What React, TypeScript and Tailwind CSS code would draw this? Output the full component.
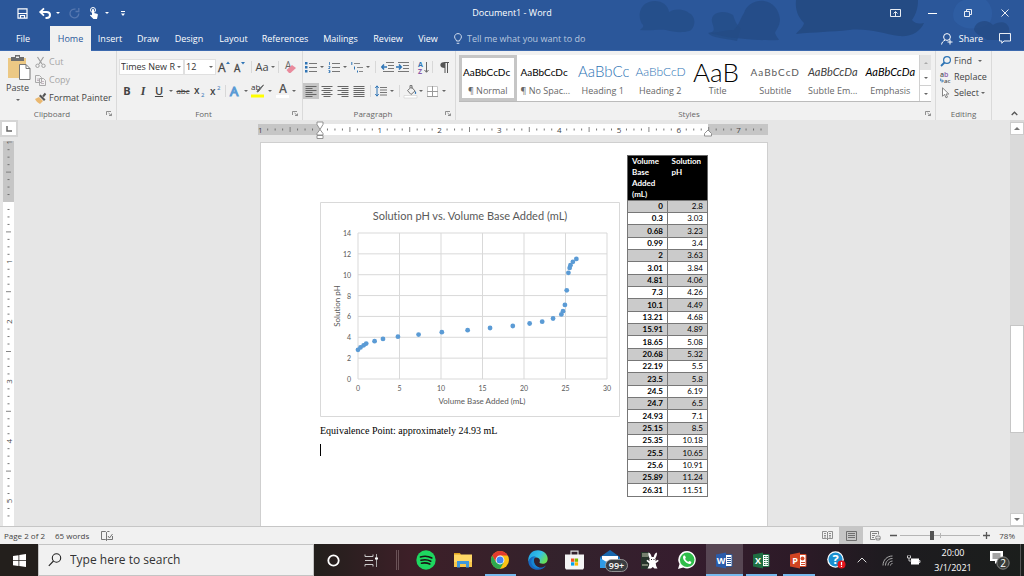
import { useState } from "react";
import type { ReactNode } from "react";
import clsx from "clsx";

const DATA: [number, number][] = [
  [0, 2.8], [0.3, 3.03], [0.68, 3.23], [0.99, 3.4], [2, 3.63], [3.01, 3.84],
  [4.81, 4.06], [7.3, 4.26], [10.1, 4.49], [13.21, 4.68], [15.91, 4.89], [18.65, 5.08],
  [20.68, 5.32], [22.19, 5.5], [23.5, 5.8], [24.5, 6.19], [24.7, 6.5], [24.93, 7.1],
  [25.15, 8.5], [25.35, 10.18], [25.5, 10.65], [25.6, 10.91], [25.89, 11.24], [26.31, 11.51],
];

const TABS = [
  { label: "Insert", width: "w-[38px]" },
  { label: "Draw", width: "w-[38px]" },
  { label: "Design", width: "w-[44px]" },
  { label: "Layout", width: "w-[45px]" },
  { label: "References", width: "w-[58px]" },
  { label: "Mailings", width: "w-[53px]" },
  { label: "Review", width: "w-[42px]" },
  { label: "View", width: "w-[38px]" },
];

const STYLES = [
  { label: "¶ Normal", sample: "AaBbCcDc", look: "text-[10px] text-black" },
  { label: "¶ No Spac...", sample: "AaBbCcDc", look: "text-[10px] text-black" },
  { label: "Heading 1", sample: "AaBbCc", look: "text-[15px] font-light text-[#2e74b5]" },
  { label: "Heading 2", sample: "AaBbCcD", look: "text-[12px] font-light text-[#2e74b5]" },
  { label: "Title", sample: "AaB", look: "text-[26px] font-light text-black" },
  { label: "Subtitle", sample: "AaBbCcD", look: "text-[10px] tracking-widest text-[#5a5a5a]" },
  { label: "Subtle Em...", sample: "AaBbCcDa", look: "text-[11px] italic text-[#404040]" },
  { label: "Emphasis", sample: "AaBbCcDa", look: "text-[11px] italic text-black" },
];

/* ── Small shared pieces ───────────────────────────────────────────── */

function Svg({ w, h, children, className }: { w: number; h: number; children: ReactNode; className?: string }) {
  return (
    <svg width={w} height={h} viewBox={`0 0 ${w} ${h}`} fill="none" aria-hidden="true" className={clsx("shrink-0 overflow-visible", className)}>
      {children}
    </svg>
  );
}

function Caret({ className = "text-[#666]" }: { className?: string }) {
  return (
    <Svg w={4} h={2} className={className}>
      <path d="M0 0h4L2 2z" fill="currentColor" />
    </Svg>
  );
}

function Tool({ label, width = "w-4", active, children }: { label: string; width?: string; active?: boolean; children: ReactNode }) {
  return (
    <button
      type="button"
      aria-label={label}
      className={clsx("flex h-4 shrink-0 items-center justify-center leading-4 text-[#444] hover:bg-[#d5d5d5]", width, active && "bg-[#c6c6c6]")}
    >
      {children}
    </button>
  );
}

function More({ label }: { label: string }) {
  return (
    <Tool label={label} width="w-2">
      <Caret />
    </Tool>
  );
}

function Sep({ margin = "mx-[3px]" }: { margin?: string }) {
  return <span className={clsx("h-3 w-px shrink-0 bg-[#d8d8d8]", margin)} />;
}

function Group({ title, className, launcher, children }: { title: string; className: string; launcher?: boolean; children: ReactNode }) {
  return (
    <section aria-label={title} className={clsx("relative flex shrink-0 flex-col border-r border-[#dadada]", className)}>
      <div className="h-[57px]">{children}</div>
      <p className={clsx("text-center text-[8px] leading-3 text-[#666]", launcher && "pr-3")}>{title}</p>
      {launcher && (
        <button type="button" aria-label={`${title} settings`} className="absolute right-1 bottom-1">
          <Svg w={6} h={5}>
            <path d="M.5 4V.5H5M2.500 2l2.800 2.500M5.500 2.500v2H3" stroke="#777" strokeWidth=".8" />
          </Svg>
        </button>
      )}
    </section>
  );
}

/* ── Title bar and tabs ────────────────────────────────────────────── */

function HeaderArt() {
  return (
    <svg className="absolute top-0 right-0" width="404" height="42" viewBox="0 0 404 42" fill="#244b84" aria-hidden="true">
      <path d="M20 30c2-2 4-3 3-5-6-7-4-20 6-23 10-3 19 2 20 10 6-4 16-3 20 1 6 3 7 10 3 16-3 4-16 4-26 1-8-1-14 1-26 0z" opacity=".7" />
      <path d="M92 22c-2-10 12-13 21-7 2 5 3 10 8 13l-4 13c-14-3-25-3-29-8 8-1 6-4 4-11z" opacity=".7" />
      <path d="M124 13c3-9 12-13 20-12 9 1 15 9 16 18 0 7-4 11-5 14 1 3 3 5 4 7-16 1-36-1-52-3l-18-4c10 0 14-3 25-3 5-5 6-11 10-17z" opacity=".8" />
      <path d="M176 0h122c0 8-2 14-6 20 4 4 6 4 12 3-4 9-13 14-25 13-16-2-30-8-50-6-18 2-34 2-53 4 3-4 7-6 8-11-6-6-9-13-8-23z" />
      <path d="M334 20c-3-8 2-18 10-20h22c6 6 8 14 4 22-8 8-28 10-36-2z" fill="#3061a8" opacity=".6" />
      <path d="M354 30c0-8 12-13 19-5 6-4 14-4 16 3 1 6-2 8 2 12h-24c-4-4-10-4-13-10z" opacity=".8" />
    </svg>
  );
}

function TitleBar() {
  return (
    <div className="relative grid h-[26px] grid-cols-[1fr_auto_1fr] items-center">
      <div className="flex items-center text-white">
        <button type="button" aria-label="Save" className="ml-4 flex w-3 justify-center">
          <Svg w={11} h={11}>
            <path d="M1 .8h9v9.400H1z" stroke="white" strokeWidth="1.200" />
            <path d="M1 5.500h9M3.500 10V7.500h4V10" stroke="white" strokeWidth="1.200" />
          </Svg>
        </button>
        <button type="button" aria-label="Undo" className="ml-[11px] flex w-3 justify-center">
          <Svg w={12} h={11}>
            <path d="M1.500 4h6c2 0 3.500 1 3.500 3s-1.500 3-3.500 3H6.500" stroke="white" strokeWidth="2" />
            <path d="M5 .3 1.200 4 5 7.700" stroke="white" strokeWidth="1.800" />
          </Svg>
        </button>
        <span className="ml-[5px]"><Caret className="text-white" /></span>
        <button type="button" aria-label="Redo" className="ml-2 flex w-3 justify-center">
          <Svg w={11} h={11}>
            <path d="M6.500 1.200A4.400 4.400 0 1 0 9.800 5.500M6.500 3.500h3.300V0" stroke="#5577b0" strokeWidth="1.300" />
          </Svg>
        </button>
        <button type="button" aria-label="Touch mode" className="ml-2 flex w-3 justify-center">
          <Svg w={10} h={12}>
            <circle cx="4" cy="3" r="2.500" stroke="white" />
            <path d="M3 3c0-1.200 2-1.200 2 0v3l3 .8c.8.200 1 .7.8 1.500L8 12H4.500L1 8.500c0-1 1-1 2-.3z" fill="white" />
          </Svg>
        </button>
        <span className="ml-[5px]"><Caret className="text-white" /></span>
        <button type="button" aria-label="Customize toolbar" className="ml-3">
          <Svg w={4} h={5}>
            <path d="M0 .5h4" stroke="white" />
            <path d="M0 2.500h4L2 5z" fill="white" />
          </Svg>
        </button>
      </div>
      <h1 className="text-[9px] text-white">Document1 - Word</h1>
      <div className="flex items-center justify-end">
        <button type="button" aria-label="Ribbon display options" className="flex w-[38px] justify-center">
          <Svg w={11} h={8}>
            <path d="M.5.5h10v7H.5zM5.500 7V3M3.500 4.500l2-2 2 2" stroke="white" strokeWidth=".9" />
          </Svg>
        </button>
        <button type="button" aria-label="Minimize" className="flex w-9 justify-center">
          <Svg w={9} h={1}><path d="M0 .5h9" stroke="white" /></Svg>
        </button>
        <button type="button" aria-label="Restore" className="flex w-9 justify-center">
          <Svg w={8} h={8}>
            <path d="M.5 2.500h5v5h-5zM2.500 2V.5h5v5H6" stroke="white" strokeWidth=".9" />
          </Svg>
        </button>
        <button type="button" aria-label="Close" className="flex w-[38px] justify-center">
          <Svg w={8} h={8}><path d="m.5.5 7 7m0-7-7 7" stroke="white" strokeWidth=".9" /></Svg>
        </button>
      </div>
    </div>
  );
}

function RibbonTabs() {
  return (
    <div className="relative flex h-[25px] text-[9px] text-white shadow-[inset_0_-1px_#3c69ae]">
      <button type="button" className="w-[46px]">File</button>
      <button type="button" className="ml-1 w-[41px] bg-[#f1f1f1] text-[#2b579a]">Home</button>
      {TABS.map(({ label, width }) => (
        <button key={label} type="button" className={clsx("text-center", width)}>{label}</button>
      ))}
      <label className="ml-[7px] flex items-center gap-[5px]">
        <Svg w={8} h={11}>
          <path d="M2.500 8C2.500 6.500.6 6 .6 3.900.6 2 2 .6 4 .6s3.400 1.400 3.400 3.300C7.400 6 5.500 6.500 5.500 8zM2.700 10.300h2.600" stroke="#d5dfee" />
        </Svg>
        <input placeholder="Tell me what you want to do" className="w-[150px] bg-transparent text-[9px] outline-none placeholder:text-[#b8c7df]" />
      </label>
      <div className="ml-auto flex items-center">
        <button type="button" className="flex items-center gap-1.5">
          <Svg w={12} h={12}>
            <circle cx="6" cy="4" r="3.400" stroke="white" />
            <path d="M.6 11.500c.2-2 1.500-3.600 3.400-4.300M9 6.500v5M6.500 9h5" stroke="white" />
          </Svg>
          Share
        </button>
        <button type="button" aria-label="Comments" className="mr-[13px] ml-4">
          <Svg w={12} h={11}><path d="M.5.5h11v7.500H5L2.800 10.300V8H.5z" stroke="white" strokeWidth=".9" /></Svg>
        </button>
      </div>
    </div>
  );
}

/* ── Ribbon ────────────────────────────────────────────────────────── */

function Clipboard() {
  return (
    <Group title="Clipboard" className="w-[117px]" launcher>
      <div className="flex">
        <button type="button" className="flex w-[35px] flex-col items-center pt-1 text-[9px] leading-3 text-[#444]">
          <Svg w={23} h={25} className="ml-1">
            <path d="M0 3h18v20H0z" fill="#ecc884" />
            <path d="M3 2h4V0h5v2h4v4H3z" fill="#6d6d6d" />
            <path d="M8 1.500h3v1.500H8z" fill="#f1f1f1" />
            <path d="M11.500 9.500h6.500l4 4v11H11.500z" fill="white" stroke="#777" />
            <path d="M18 9.500v4h4" stroke="#777" />
          </Svg>
          <span className="mt-0.5">Paste</span>
          <span className="mt-[5px]"><Caret /></span>
        </button>
        <div className="flex flex-col gap-0.5 pt-[3px] text-[9px]">
          <button type="button" className="flex h-4 items-center gap-[3px] text-[#a6a6a6]">
            <Svg w={11} h={11}>
              <path d="M2.500 0 7 7M8.500 0 4 7" stroke="#a0a0a0" strokeWidth="1.200" />
              <circle cx="2.500" cy="8.800" r="1.700" stroke="#a0a0a0" />
              <circle cx="8.500" cy="8.800" r="1.700" stroke="#a0a0a0" />
            </Svg>
            Cut
          </button>
          <button type="button" className="flex h-4 items-center gap-[3px] text-[#a6a6a6]">
            <Svg w={11} h={11}>
              <path d="M.5.5h4l2 2v5h-6zM4.500 3.500h4l2 2v5h-6z" fill="#f1f1f1" stroke="#aaa" />
              <path d="M2 4h2M2 5.500h2M6 6.500h3M6 8.500h3" stroke="#b8a8b4" strokeWidth=".8" />
            </Svg>
            Copy
          </button>
          <button type="button" className="flex h-4 items-center gap-[3px] whitespace-nowrap text-[#444]">
            <Svg w={11} h={11}>
              <path d="m0 6 4-2 4 4-3 3c-2-1-4-3-5-5z" fill="#eab870" />
              <path d="m4 3 1.500-1.500 5 5L9 8z" fill="#555" />
              <path d="m8 3.500 2.500-3" stroke="#555" strokeWidth="2" />
            </Svg>
            Format Painter
          </button>
        </div>
      </div>
    </Group>
  );
}

function FontGroup() {
  return (
    <Group title="Font" className="w-[186px]" launcher>
      <div className="flex flex-col gap-2 pt-2 pl-0.5">
        <div className="flex h-4 items-center">
          <div className="relative h-4 w-[65px]">
            <select aria-label="Font name" className="block h-4 w-full appearance-none border border-[#e0e0e0] bg-white pl-px text-[9px] leading-[14px] text-[#333]">
              <option>Times New R</option>
            </select>
            <span className="pointer-events-none absolute inset-y-0 right-[3px] flex items-center"><Caret /></span>
          </div>
          <div className="relative h-4 w-8">
            <select aria-label="Font size" className="block h-4 w-full appearance-none border border-[#e0e0e0] bg-white pl-px text-[9px] leading-[14px] text-[#333]">
              <option>12</option>
            </select>
            <span className="pointer-events-none absolute inset-y-0 right-[3px] flex items-center"><Caret /></span>
          </div>
          <Tool label="Grow font">
            <Svg w={12} h={12}>
              <text x="0" y="11" fontSize="12" fill="#444" stroke="#444" strokeWidth=".3">A</text>
              <path d="M8 3h4l-2-2.500z" fill="#2e74b5" />
            </Svg>
          </Tool>
          <Tool label="Shrink font">
            <Svg w={12} h={12}>
              <text x="0" y="11" fontSize="10" fill="#444" stroke="#444" strokeWidth=".3">A</text>
              <path d="M7 1h4L9 3.500z" fill="#2e74b5" />
            </Svg>
          </Tool>
          <Sep />
          <Tool label="Change case" width="w-5">
            <span className="mr-0.5 text-[11px]">Aa</span>
            <Caret />
          </Tool>
          <Sep />
          <Tool label="Clear formatting">
            <Svg w={12} h={12}>
              <text x="1" y="8" fontSize="10" fill="#666">A</text>
              <path d="m2.500 9 5.500-5L12 7l-5.500 5H5z" fill="#e98a9c" />
            </Svg>
          </Tool>
        </div>
        <div className="flex h-4 items-center">
          <Tool label="Bold"><span className="text-[11px] font-bold">B</span></Tool>
          <Tool label="Italic"><span className="font-['Liberation_Serif'] text-[12px] font-bold italic">I</span></Tool>
          <Tool label="Underline"><span className="text-[11px] font-semibold underline">U</span></Tool>
          <More label="Underline styles" />
          <Tool label="Strikethrough"><span className="text-[8px] line-through">abc</span></Tool>
          <Tool label="Subscript">
            <Svg w={11} h={12}>
              <text x="0" y="9" fontSize="10" fontWeight="600" fill="#444">x</text>
              <text x="7" y="12" fontSize="6" fill="#2e74b5">2</text>
            </Svg>
          </Tool>
          <Tool label="Superscript">
            <Svg w={11} h={12}>
              <text x="0" y="10" fontSize="10" fontWeight="600" fill="#444">x</text>
              <text x="7" y="5" fontSize="6" fill="#2e74b5">2</text>
            </Svg>
          </Tool>
          <Sep margin="mx-0.5" />
          <Tool label="Text effects" width="w-[14px]">
            <Svg w={12} h={12}>
              <text x="1" y="11" fontSize="13" fill="white" stroke="#5b9bd5" strokeWidth="1.200">A</text>
            </Svg>
          </Tool>
          <More label="Text effect styles" />
          <Tool label="Highlight">
            <Svg w={14} h={14}>
              <text x="0" y="6" fontSize="8" fill="#333">ab</text>
              <path d="m12.500 1-5 6.500L6 8l.5-1.500z" fill="#666" stroke="#666" />
              <path d="M0 10.500h13v3H0z" fill="#ffff00" />
            </Svg>
          </Tool>
          <More label="Highlight colors" />
          <Tool label="Font color">
            <Svg w={13} h={14}>
              <text x="3" y="9" fontSize="12" fontWeight="600" fill="#555">A</text>
              <path d="M0 11h13v3H0z" fill="white" />
            </Svg>
          </Tool>
          <More label="Font colors" />
        </div>
      </div>
    </Group>
  );
}

function Lines({ d }: { d: string }) {
  return (
    <Svg w={12} h={11}>
      <path d={d} stroke="#666" />
    </Svg>
  );
}

function Paragraph() {
  return (
    <Group title="Paragraph" className="w-[153px]" launcher>
      <div className="flex flex-col gap-2 pt-2">
        <div className="flex h-4 items-center">
          <Tool label="Bullets" width="w-[15px]">
            <Svg w={12} h={11}>
              <path d="M4 1.500h8M4 5.500h8M4 9.500h8" stroke="#777" />
              <path d="M0 0h2.500v2.500H0zM0 4h2.500v2.500H0zM0 8h2.500v2.500H0z" fill="#2e74b5" />
            </Svg>
          </Tool>
          <More label="Bullet styles" />
          <Tool label="Numbering" width="w-[15px]">
            <Svg w={12} h={11}>
              <path d="M4 1.500h8M4 5.500h8M4 9.500h8" stroke="#777" />
              <path d="M1.500 0v3M.5 4.500h1.500v1L.5 6.500H2M.5 8.500h1.500v2H.5M1 9.500h1" stroke="#2e74b5" strokeWidth=".8" />
            </Svg>
          </Tool>
          <More label="Numbering styles" />
          <Tool label="Multilevel list" width="w-[15px]">
            <Svg w={12} h={11}>
              <path d="M3 1.500h6M6 5.500h6M8 9.500h4" stroke="#888" />
              <path d="M.8 0v3M3.500 4.500v3M6.500 8.500v2" stroke="#2e74b5" />
            </Svg>
          </Tool>
          <More label="Multilevel styles" />
          <Sep />
          <Tool label="Decrease indent">
            <Svg w={13} h={10}>
              <path d="M5 .5h8M7 3.500h6M7 6.500h6M2 9.500h11" stroke="#777" />
              <path d="M6 5H1M3 2.500.8 5 3 7.500" stroke="#2e74b5" strokeWidth="1.500" />
            </Svg>
          </Tool>
          <Tool label="Increase indent" width="w-[15px]">
            <Svg w={13} h={10}>
              <path d="M2 .5h11M7 3.500h6M7 6.500h6M2 9.500h11" stroke="#777" />
              <path d="M0 5h5M3 2.500 5.300 5 3 7.500" stroke="#2e74b5" strokeWidth="1.500" />
            </Svg>
          </Tool>
          <Sep />
          <Tool label="Sort" width="w-3">
            <Svg w={11} h={13}>
              <text x="0" y="6" fontSize="7" fontWeight="700" fill="#2e74b5">A</text>
              <text x="0" y="13" fontSize="7" fontWeight="700" fill="#8b5ba8">Z</text>
              <path d="M8.500 1v10M6.500 9l2 2.300 2-2.300" stroke="#666" />
            </Svg>
          </Tool>
          <Sep />
          <Tool label="Show marks">
            <Svg w={9} h={11}>
              <path d="M4.500.5H9M5 .5v10.500M7.500.5v10.500" stroke="#555" />
              <path d="M5 0v6C2 6 .3 5 .3 3S2 0 5 0z" fill="#555" />
            </Svg>
          </Tool>
        </div>
        <div className="flex h-4 items-center">
          <Tool label="Align left" active><Lines d="M.5.5h11M.5 2.500h7M.5 4.500h11M.5 6.500h7M.5 8.500h11M.5 10.500h7" /></Tool>
          <Tool label="Center"><Lines d="M.5.5h11M2.500 2.500h7M.5 4.500h11M2.500 6.500h7M.5 8.500h11M2.500 10.500h7" /></Tool>
          <Tool label="Align right"><Lines d="M.5.5h11M4.500 2.500h7M.5 4.500h11M4.500 6.500h7M.5 8.500h11M4.500 10.500h7" /></Tool>
          <Tool label="Justify"><Lines d="M.5.5h11M.5 2.500h11M.5 4.500h11M.5 6.500h11M.5 8.500h11M.5 10.500h11" /></Tool>
          <Sep />
          <Tool label="Line spacing" width="w-[14px]">
            <Svg w={12} h={12}>
              <path d="M5 2.500h7M5 5h7M5 7.500h7M5 10h7" stroke="#777" />
              <path d="M2 1v10M.3 3 2 .8 3.700 3M.3 9 2 11.200 3.700 9" stroke="#2e74b5" />
            </Svg>
          </Tool>
          <More label="Line spacing options" />
          <Sep />
          <Tool label="Shading" width="w-[14px]">
            <Svg w={13} h={13}>
              <path d="m3.500 5.500 4-3.500 3.500 4-4 3.500zM6 3V.5h2V4" stroke="#777" />
              <path d="M11.500 6c.8 1.300 1 3 0 3s-.8-1.700 0-3z" fill="#2e74b5" />
              <path d="M0 10.500h13V13H0z" fill="white" stroke="#ccc" strokeWidth=".6" />
            </Svg>
          </Tool>
          <More label="Shading colors" />
          <Tool label="Borders" width="w-[15px]">
            <Svg w={11} h={11}>
              <path d="M.5.5h10v10H.5z" fill="white" stroke="#c8c8c8" />
              <path d="M0 5.500h11M5.500 0v11M0 10.500h11" stroke="#999" />
            </Svg>
          </Tool>
          <More label="Border styles" />
        </div>
      </div>
    </Group>
  );
}

function StylesGroup() {
  const [selected, setSelected] = useState(0);
  return (
    <Group title="Styles" className="min-w-0 flex-1 pr-1 pl-[3px]" launcher>
      <div className="mt-1 flex h-[47px] overflow-hidden border-b border-[#bbb] bg-white">
        {STYLES.map(({ label, sample, look }, i) => (
          <button
            key={label}
            type="button"
            onClick={() => setSelected(i)}
            className={clsx("flex min-w-0 flex-1 flex-col border-[3px]", i === selected ? "border-[#c6c6c6]" : "border-transparent")}
          >
            <span className={clsx("flex h-[27px] w-full items-center overflow-hidden pl-px font-[Lato] leading-none whitespace-nowrap", look)}>
              {sample}
            </span>
            <span className="w-full text-center text-[9px] leading-3 whitespace-nowrap text-[#666]">{label}</span>
          </button>
        ))}
        <div className="flex w-3 shrink-0 flex-col border-l border-[#d0d0d0]">
          <button type="button" aria-label="Previous styles" className="flex flex-1 items-center justify-center bg-[#e3e3e3]">
            <Svg w={4} h={2}><path d="M0 2h4L2 0z" fill="#aaa" /></Svg>
          </button>
          <button type="button" aria-label="Next styles" className="flex flex-1 items-center justify-center border-b border-[#d0d0d0]">
            <Caret />
          </button>
          <button type="button" aria-label="All styles" className="flex flex-1 items-center justify-center"><Caret /></button>
        </div>
      </div>
    </Group>
  );
}

function Editing() {
  return (
    <Group title="Editing" className="w-[56px]">
      <div className="flex flex-col items-start pt-0.5 pl-1 text-[9px] text-[#444]">
        <button type="button" className="flex h-4 items-center">
          <Svg w={13} h={11} className="mr-px">
            <circle cx="7" cy="4" r="3.400" stroke="#2e74b5" strokeWidth="1.200" />
            <path d="M4.500 6.500 1 10" stroke="#2e74b5" strokeWidth="1.800" />
          </Svg>
          <span className="mr-1.5">Find</span><Caret />
        </button>
        <button type="button" className="flex h-4 items-center">
          <Svg w={13} h={12} className="mr-px">
            <text x="0" y="6" fontSize="7" fontWeight="600" fill="#555">a</text>
            <text x="4" y="6" fontSize="7" fontWeight="600" fill="#8b5ba8">b</text>
            <text x="4" y="12" fontSize="6" fontWeight="600" fill="#555">ac</text>
            <path d="M.7 7.500v2.500H3M2 8.500 3.500 10 2 11.500" stroke="#2e74b5" strokeWidth=".9" />
          </Svg>
          Replace
        </button>
        <button type="button" className="flex h-4 items-center">
          <Svg w={13} h={12} className="mr-px">
            <path d="M2.500.8v8.500l2-2 1.500 3.500 1.500-.7L6 7h2.800z" fill="white" stroke="#777" strokeWidth=".9" />
          </Svg>
          <span className="mr-0.5">Select</span><Caret />
        </button>
      </div>
    </Group>
  );
}

/* ── Rulers ────────────────────────────────────────────────────────── */

const PER_INCH = 59.8;

function Marks({ from, to, vertical }: { from: number; to: number; vertical?: boolean }) {
  const marks = [];
  for (let i = from; i <= to; i++) {
    if (i === 0) continue;
    const at = (i * PER_INCH) / 8;
    const half = i % 4 === 0;
    if (i % 8 === 0) {
      marks.push(
        <text key={i} textAnchor="middle" fontSize="8" fill="#444" transform={vertical ? `translate(8.500 ${at}) rotate(-90)` : `translate(${at} 8.500)`}>
          {Math.abs(i / 8)}
        </text>
      );
    } else {
      const r = half ? 2.5 : 1;
      marks.push(<path key={i} d={vertical ? `M${5.5 - r} ${at}h${2 * r}` : `M${at} ${5.5 - r}v${2 * r}`} stroke={half ? "#777" : "#666"} strokeWidth=".9" />);
    }
  }
  return <>{marks}</>;
}

function HorizontalRuler() {
  return (
    <svg className="mt-1 shrink-0 overflow-visible" width="508" height="11" viewBox="-60 0 508 11" aria-label="Horizontal ruler">
      <path d="M-62 0h510v11H-62z" fill="#c6c6c6" />
      <path d="M0 0h388v11H0z" fill="white" />
      <Marks from={-8} to={59} />
      <path d="M-3-2h6v2.500L0 5.500-3 .5zM0 5.500l3 4v1.500h-6V9.500zM-3 11.500h6v3h-6z" fill="white" stroke="#888" strokeWidth=".9" />
      <path d="m388 6 3.500 3.500V12h-7V9.500z" fill="white" stroke="#888" strokeWidth=".9" />
    </svg>
  );
}

function VerticalRuler() {
  return (
    <div className="flex w-[18px] shrink-0 flex-col overflow-hidden">
      <button type="button" aria-label="Tab selector" className="h-[17px] w-[18px] border-2 border-[#d5d5d5] bg-white text-[#555]">
        <Svg w={14} h={13}><path d="M5 4v5h5" stroke="#666" strokeWidth="1.500" /></Svg>
      </button>
      <svg className="mt-1 ml-[3px] shrink-0" width="11" height="420" viewBox="0 -61 11 420" aria-label="Vertical ruler">
        <path d="M0-61h11V0H0z" fill="#c6c6c6" />
        <path d="M0 0h11v600H0z" fill="white" />
        <Marks from={-8} to={42} vertical />
      </svg>
    </div>
  );
}

/* ── Document ──────────────────────────────────────────────────────── */

const px = (v: number) => 38 + (v / 30) * 249;
const py = (v: number) => 177 - (v / 14) * 146;

function TitrationChart() {
  return (
    <svg width="300" height="215" viewBox="0 0 300 215" role="img" aria-label="Solution pH vs. Volume Base Added" className="font-[Lato] [font-variant-ligatures:none]">
      <path d="M.5.5h299v214H.5z" fill="white" stroke="#d9d9d9" />
      <text x="150" y="18" textAnchor="middle" fontSize="11" fill="#595959">Solution pH vs. Volume Base Added (mL)</text>
      {[0, 2, 4, 6, 8, 10, 12, 14].map((v) => (
        <g key={v}>
          <path d={`M38 ${py(v)}h249`} stroke="#d9d9d9" />
          <text x="31" y={py(v) + 3} textAnchor="end" fontSize="7" fill="#595959">{v}</text>
        </g>
      ))}
      {[0, 5, 10, 15, 20, 25, 30].map((v) => (
        <g key={v}>
          <path d={`M${px(v)} 31v146`} stroke="#d9d9d9" />
          <text x={px(v)} y="189" textAnchor="middle" fontSize="7" fill="#595959">{v}</text>
        </g>
      ))}
      {DATA.map(([x, y]) => (
        <circle key={x} cx={px(x)} cy={py(y)} r="2.400" fill="#5b9bd5" />
      ))}
      <text x="162" y="202" textAnchor="middle" fontSize="8" fill="#595959">Volume Base Added (mL)</text>
      <text transform="translate(20 104) rotate(-90)" textAnchor="middle" fontSize="8" fill="#595959">Solution pH</text>
    </svg>
  );
}

function DataTable() {
  return (
    <table className="w-[81px] table-fixed border-collapse border border-[#666] font-[Lato] text-[8px] leading-[11px] text-black [font-variant-ligatures:none]">
      <thead className="bg-black text-left text-white">
        <tr className="h-[45px] align-top">
          <th scope="col" className="w-10 pl-1">Volume Base Added (mL)</th>
          <th scope="col" className="pl-1">Solution pH</th>
        </tr>
      </thead>
      <tbody>
        {DATA.map(([volume, ph]) => (
          <tr key={volume} className="h-3 odd:bg-[#cbcbcb] nth-[3n]:h-[13px]">
            <th scope="row" className="border border-[#777] pr-1 text-right">{volume}</th>
            <td className="border border-[#777] pr-1 text-right">{ph}</td>
          </tr>
        ))}
      </tbody>
    </table>
  );
}

function Page() {
  return (
    <article className="mt-[7px] flex w-[508px] flex-1 items-start justify-between border border-b-0 border-[#cfcfcf] bg-white px-[59px]">
      <div className="pt-[59px]">
        <TitrationChart />
        <p className="mt-2 font-['Liberation_Serif'] text-[10px] leading-3 text-black">Equivalence Point: approximately 24.93 mL</p>
        <div className="mt-[7px] h-3 w-px bg-black" />
      </div>
      <div className="pt-3">
        <DataTable />
      </div>
    </article>
  );
}

function ScrollBar() {
  return (
    <div className="flex w-[14px] shrink-0 flex-col bg-[#dadada] pt-0.5">
      <button type="button" aria-label="Scroll up" className="flex h-[13px] shrink-0 items-center justify-center border border-[#ccc] bg-white">
        <Svg w={6} h={3}><path d="M0 3h6L3 0z" fill="#777" /></Svg>
      </button>
      <div className="grow-[191]" />
      <div className="h-[108px] border border-[#c6c6c6] bg-white" />
      <div className="grow-[81]" />
      <button type="button" aria-label="Scroll down" className="flex h-[13px] shrink-0 items-center justify-center border border-[#ccc] bg-white">
        <Svg w={6} h={3}><path d="M0 0h6L3 3z" fill="#777" /></Svg>
      </button>
    </div>
  );
}

/* ── Status bar ────────────────────────────────────────────────────── */

function StatusBar() {
  const [zoom, setZoom] = useState(39);
  return (
    <footer className="flex h-[18px] shrink-0 items-center border-t border-[#c6c6c6] bg-[#f1f1f1] pl-1 text-[8px] text-[#444]">
      <span>Page 2 of 2</span>
      <span className="ml-2.5">65 words</span>
      <Svg w={12} h={10} className="ml-3">
        <path d="M5.500 1.500v8M.5.5h4l1 1 1-1h2M8 8.500H6.500l-1 1-1-1h-4V.5M7 5l1.500 2L11.500 3M11.500 5v3.500H8" stroke="#666" strokeWidth=".9" />
      </Svg>
      <div className="ml-auto flex h-full items-center">
        <button type="button" aria-label="Read mode" className="flex h-full w-6 items-center justify-center">
          <Svg w={11} h={9}>
            <path d="M5.500 1v8M.5.5h4l1 1 1-1h4v7h-4l-1 1-1-1h-4zM2 2.500h2M2 4.500h2M7 2.500h2M7 4.500h2M2 6h2M7 6h2" stroke="#777" strokeWidth=".8" />
          </Svg>
        </button>
        <button type="button" aria-label="Print layout" className="flex h-full w-6 items-center justify-center bg-[#c6c6c6]">
          <Svg w={11} h={10}>
            <path d="M.5.5h10v9H.5zM2 2.500h7M2 4.500h7M2 6.500h7" stroke="#666" strokeWidth=".9" />
          </Svg>
        </button>
        <button type="button" aria-label="Web layout" className="flex h-full w-6 items-center justify-center">
          <Svg w={11} h={10}>
            <path d="M.5.5h8v3M.5.5v8H5M2 2.500h5M2 4.500h3M2 6.500h2" stroke="#777" strokeWidth=".9" />
            <circle cx="8" cy="7" r="2.800" fill="#999" />
            <path d="M6 6.500h4M8 4.500v5" stroke="#f1f1f1" strokeWidth=".7" />
          </Svg>
        </button>
        <button type="button" aria-label="Zoom out" className="ml-[3px]">
          <Svg w={7} h={7}><path d="M0 3.500h7" stroke="#555" strokeWidth="1.500" /></Svg>
        </button>
        <input
          type="range"
          aria-label="Zoom"
          min={0}
          max={100}
          value={zoom}
          onChange={(e) => setZoom(Number(e.target.value))}
          className="mx-[3px] h-3 w-[80px] appearance-none bg-transparent bg-[linear-gradient(#b5b5b5,#b5b5b5),linear-gradient(#b5b5b5,#b5b5b5)] bg-[length:100%_1px,1px_5px] bg-center bg-no-repeat [&::-webkit-slider-thumb]:h-[9px] [&::-webkit-slider-thumb]:w-1 [&::-webkit-slider-thumb]:appearance-none [&::-webkit-slider-thumb]:bg-[#555]"
        />
        <button type="button" aria-label="Zoom in">
          <Svg w={7} h={7}><path d="M0 3.500h7M3.500 0v7" stroke="#555" strokeWidth="1.300" /></Svg>
        </button>
        <span className="w-[34px] pr-[9px] text-right">78%</span>
      </div>
    </footer>
  );
}

/* ── Taskbar ───────────────────────────────────────────────────────── */

function OfficeIcon({ letter, color, dark, children }: { letter: string; color: string; dark: string; children: ReactNode }) {
  return (
    <Svg w={17} h={17}>
      <path d="M8 2.500h8v12H8z" fill="white" stroke={color} />
      {children}
      <path d="m0 2.500 10-2v16l-10-2z" fill={dark} />
      <text x="5" y="12" textAnchor="middle" fontSize="9" fontWeight="700" fill="white">{letter}</text>
    </Svg>
  );
}

const APPS: { label: string; state?: "open" | "focused"; icon: ReactNode }[] = [
  {
    label: "Spotify",
    icon: (
      <Svg w={20} h={20}>
        <circle cx="10" cy="10" r="9.700" fill="#1ed760" />
        <path d="M4.500 7c4-1.200 8-.8 11.300 1M5 10.300c3.500-1 7-.6 9.800.9M5.500 13.300c3-.8 5.700-.4 8.300.8" stroke="#191414" strokeWidth="1.600" strokeLinecap="round" />
      </Svg>
    ),
  },
  {
    label: "File Explorer",
    icon: (
      <Svg w={18} h={15}>
        <path d="M0 0h6l1 2H0z" fill="#e0a21c" />
        <path d="M0 1.500h18v12H0z" fill="#ffd766" />
        <path d="M0 9h18v5H0z" fill="#f7c64a" />
        <path d="M3 8h12v6.500h-3V11H6v3.500H3z" fill="#3f98dc" />
      </Svg>
    ),
  },
  {
    label: "Chrome",
    state: "open",
    icon: (
      <Svg w={18} h={18}>
        <circle cx="9" cy="9" r="9" fill="#fbc116" />
        <path d="M1.200 4.500A9 9 0 0 1 16.800 4.500H9L5.100 11.300z" fill="#e33b2e" />
        <path d="M1.200 4.500A9 9 0 0 0 9 18l3.900-6.700H5.100z" fill="#2da94f" />
        <circle cx="9" cy="9" r="4.400" fill="white" />
        <circle cx="9" cy="9" r="3.500" fill="#4285f4" />
      </Svg>
    ),
  },
  {
    label: "Edge",
    icon: (
      <Svg w={20} h={20}>
        <defs>
          <linearGradient id="edge-top" x1="0" y1="0" x2="1" y2=".5">
            <stop offset="0" stopColor="#1b9de2" />
            <stop offset=".6" stopColor="#35c1e8" />
            <stop offset="1" stopColor="#66df5b" />
          </linearGradient>
        </defs>
        <path d="M10 .3c5.500 0 9.700 4 9.700 8.500 0 3-2 5-5 5-2.200 0-3.500-.8-3.200-1.500 1-1.500.5-4.500-3-4.800C4 7 1 9 .4 12 -.5 5 4 .3 10 .3z" fill="url(#edge-top)" />
        <path d="M.4 12C1 8 4 6 7.500 6.500 4.500 9 5 16.500 11.500 17.500c2.500.3 4.500-.5 6.500-2-2 3-5 4.300-8 4.300C4.500 19.800.6 16 .4 12z" fill="#1768c0" />
        <path d="M7.500 6.500C4.800 9 5.500 16 11.500 17.500c-3 1.500-7-.5-8-4-.8-3 1-6.500 4-7z" fill="#1684d0" />
      </Svg>
    ),
  },
  {
    label: "Microsoft Store",
    icon: (
      <Svg w={19} h={20}>
        <path d="M6 5V1.200h7V5" stroke="#ddd" strokeWidth="1.200" />
        <path d="M0 4.500h19V18l-1 1.500H1L0 18z" fill="#f5f5f5" />
        <path d="M6 8.500h3.300v3.300H6z" fill="#f25022" />
        <path d="M9.800 8.500h3.300v3.300H9.800z" fill="#7fba00" />
        <path d="M6 12.300h3.300v3.300H6z" fill="#00a4ef" />
        <path d="M9.800 12.300h3.300v3.300H9.800z" fill="#ffb900" />
      </Svg>
    ),
  },
  {
    label: "Mail",
    icon: (
      <Svg w={24} h={20}>
        <path d="M0 7 10 0l10 7v11H0z" fill="#1767ad" />
        <path d="M2 6h16v6H2z" fill="white" />
        <path d="m0 8 10 6 10-6v10H0z" fill="#2f9be6" />
        <rect x="5.500" y="9.500" width="22" height="12" rx="6" fill="#3a3d41" stroke="#aaa" strokeWidth=".8" />
        <text x="16.500" y="19" textAnchor="middle" fontSize="9" fontWeight="600" fill="white">99+</text>
      </Svg>
    ),
  },
  {
    label: "Rabbit game",
    icon: (
      <Svg w={18} h={19}>
        <path d="M0 1h8v17H0z" fill="#26332b" />
        <path d="M1 2h6v4H1zM1 13h6v2H1z" fill="#77806f" />
        <path d="M7.500 1.500c1.500 0 2.700 2.500 3.200 4.500h2c.4-2 1.600-4.500 3.100-4.500.7 1.500-.5 4.500-1.600 6 .7 1 .5 2-.2 2.800l3-1.600.6 1.200-2.900 2.300c.3 1.500.2 2.500 1.800 5.300h-3l-1.700-1.600-1.800 1.600H6.500c1.600-2.500 1.800-4 1.700-5.300L5.500 10l.6-1.200 2.900 1.500c-.7-.8-.9-1.800-.2-2.800C7.500 6 6.800 3 7.500 1.500z" fill="white" />
        <path d="M10 8.500h1M12.500 8.500h1" stroke="#222" />
      </Svg>
    ),
  },
  {
    label: "WhatsApp",
    icon: (
      <Svg w={18} h={18}>
        <path d="M9.200 0a8.700 8.700 0 1 1-4 16.500L0 18l1.500-5A8.700 8.700 0 0 1 9.200 0z" fill="white" />
        <circle cx="9.200" cy="8.800" r="7.300" fill="#2fbd4a" />
        <path d="M6 4.500c.6-.3 1 0 1.200.5l.6 1.400c.1.5-.7 1.100-.7 1.400.6 1.300 1.700 2.300 3 2.900.4.100 1-.9 1.400-.8l1.600.8c.5.300.3 1.800-1 2.200C9.500 13.500 5 9.500 5 6.500c0-.9.5-1.700 1-2z" fill="white" />
      </Svg>
    ),
  },
  {
    label: "Word",
    state: "focused",
    icon: (
      <OfficeIcon letter="W" color="#2b579a" dark="#2a5cab">
        <path d="M11 5.500h4M11 7.500h4M11 9.500h4M11 11.500h4" stroke="#2b579a" />
      </OfficeIcon>
    ),
  },
  {
    label: "Excel",
    state: "open",
    icon: (
      <OfficeIcon letter="X" color="#217346" dark="#1e6f42">
        <path d="M11 4.500h1.500M13.500 4.500H15M11 6.500h1.500M13.500 6.500H15M11 8.500h1.500M13.500 8.500H15M11 10.500h1.500M13.500 10.500H15M11 12.500h1.500M13.500 12.500H15" stroke="#217346" />
      </OfficeIcon>
    ),
  },
  {
    label: "PowerPoint",
    state: "open",
    icon: (
      <OfficeIcon letter="P" color="#d24726" dark="#d04423">
        <circle cx="12.500" cy="6.500" r="2" fill="#d24726" />
        <path d="M11 10.500h4M11 12.500h4" stroke="#d24726" />
      </OfficeIcon>
    ),
  },
  {
    label: "Help",
    icon: (
      <Svg w={19} h={18}>
        <circle cx="8.500" cy="8.500" r="8.300" fill="white" />
        <circle cx="8.500" cy="8.500" r="7" fill="#1a8fd1" />
        <text x="8.500" y="13" textAnchor="middle" fontSize="13" fontWeight="700" fill="white">?</text>
        <circle cx="14.500" cy="13.500" r="4" fill="#e5141b" />
        <path d="M14.500 11v3.200M14.500 15v1" stroke="white" strokeWidth="1.200" />
      </Svg>
    ),
  },
];

function Taskbar() {
  return (
    <nav aria-label="Taskbar" className="flex h-8 shrink-0 bg-[linear-gradient(90deg,#231f1c_0%,#231f1c_31%,#3d1f28_40%,#33222c_55%,#361d2e_66%,#2c1a27_78%,#1d1b1f_87%,#1b1e1c_100%)]">
      <button type="button" aria-label="Start" className="flex w-[38px] items-center justify-center">
        <Svg w={13} h={13}>
          <path d="m0 2 5.500-.8v5H0zM6.300 1 13 0v6.200H6.300zM0 7h5.500v5L0 11.200zM6.300 7H13v6l-6.700-1z" fill="white" />
        </Svg>
      </button>
      <label className="flex w-[276px] items-center gap-2 border border-[#c4c4c4] bg-[#f1f1f1] pl-[9px]">
        <Svg w={14} h={14}>
          <circle cx="8.500" cy="5" r="4.200" stroke="#222" strokeWidth="1.100" />
          <path d="M5.500 8 .8 12.800" stroke="#222" strokeWidth="1.100" />
        </Svg>
        <input type="search" placeholder="Type here to search" className="min-w-0 flex-1 bg-transparent text-[12px] outline-none placeholder:text-[#333]" />
      </label>
      <button type="button" aria-label="Cortana" className="flex w-[38px] items-center justify-center">
        <Svg w={13} h={13}><circle cx="6.500" cy="6.500" r="5.200" stroke="white" strokeWidth="1.800" /></Svg>
      </button>
      <button type="button" aria-label="Task view" className="flex w-[38px] items-center justify-center">
        <Svg w={13} h={13}>
          <path d="M0 .5v2h8v-2M0 12.500v-2h8v2M0 6.500h8" stroke="#ccc" />
          <path d="M11.500 0v13" stroke="#aaa" />
          <path d="M10 4.500h3" stroke="white" strokeWidth="2" />
        </Svg>
      </button>
      <div className="mx-[6px] my-1.5 w-[3px] border-x border-[#6a5257]" />
      <div className="grid w-[450px] grid-cols-12 pl-0.5">
        {APPS.map(({ label, state, icon }) => (
          <button
            key={label}
            type="button"
            aria-label={label}
            className={clsx(
              "flex items-center justify-center border-y-2 border-transparent",
              state && "border-b-[#76b9ed]",
              state === "open" && "mx-[3px]",
              state === "focused" && "bg-[#574653]"
            )}
          >
            {icon}
          </button>
        ))}
      </div>
      <div className="mr-[3px] ml-auto flex items-center">
        <button type="button" aria-label="Hidden icons">
          <Svg w={10} h={6}><path d="m.7 5.300 4.300-4.300 4.300 4.300" stroke="#ddd" /></Svg>
        </button>
        <Svg w={11} h={11} className="ml-[15px]">
          <path d="M1 10.500C1 5 5 1 10.500 1M3.500 10.500c0-4 3-7 7-7M6 10.500c0-2.500 2-4.500 4.500-4.500M8.500 10.500c0-1.200.8-2 2-2" stroke="#aaa" />
        </Svg>
        <Svg w={13} h={10} className="ml-[14px]">
          <path d="M4 3.500h8v6H4z" fill="white" />
          <path d="M12 5.500h1v2h-1zM.5 1v2h3V1M2 3v3h3M1 0v1M3 0v1" stroke="#ddd" strokeWidth=".9" />
        </Svg>
        <time className="ml-3 w-[42px] text-center text-[9px] leading-[15px] text-white">20:00<br />3/1/2021</time>
        <button type="button" aria-label="Notifications" className="ml-4 flex h-full items-center border-r border-[#555] pr-[10px]">
          <Svg w={20} h={20}>
            <path d="M0 1h13v10H8l-3 3v-3H0z" fill="white" />
            <path d="M2.500 4h8M2.500 6h8M2.500 8h8" stroke="#333" strokeWidth=".9" />
            <circle cx="13" cy="13" r="6.200" fill="#3a3d3a" stroke="#999" strokeWidth=".8" />
            <text x="13" y="16.500" textAnchor="middle" fontSize="10" fill="white">2</text>
          </Svg>
        </button>
      </div>
    </nav>
  );
}

export default function App() {
  return (
    <div className="flex h-screen flex-col overflow-hidden bg-[#e6e6e6] font-['Open_Sans',sans-serif]">
      <header className="relative shrink-0 bg-[#2b579a]">
        <HeaderArt />
        <TitleBar />
        <RibbonTabs />
      </header>
      <div className="flex h-[69px] shrink-0 bg-[#f1f1f1]">
        <Clipboard />
        <FontGroup />
        <Paragraph />
        <StylesGroup />
        <Editing />
        <div className="flex w-8 items-end justify-center pb-1 pl-3">
          <button type="button" aria-label="Collapse ribbon">
            <Svg w={7} h={5}><path d="m.7 4 2.800-2.800L6.300 4" stroke="#555" strokeWidth="1.300" /></Svg>
          </button>
        </div>
      </div>
      <main className="flex min-h-0 flex-1">
        <VerticalRuler />
        <div className="flex min-w-0 flex-1 flex-col items-center">
          <HorizontalRuler />
          <Page />
        </div>
        <ScrollBar />
      </main>
      <StatusBar />
      <Taskbar />
    </div>
  );
}
